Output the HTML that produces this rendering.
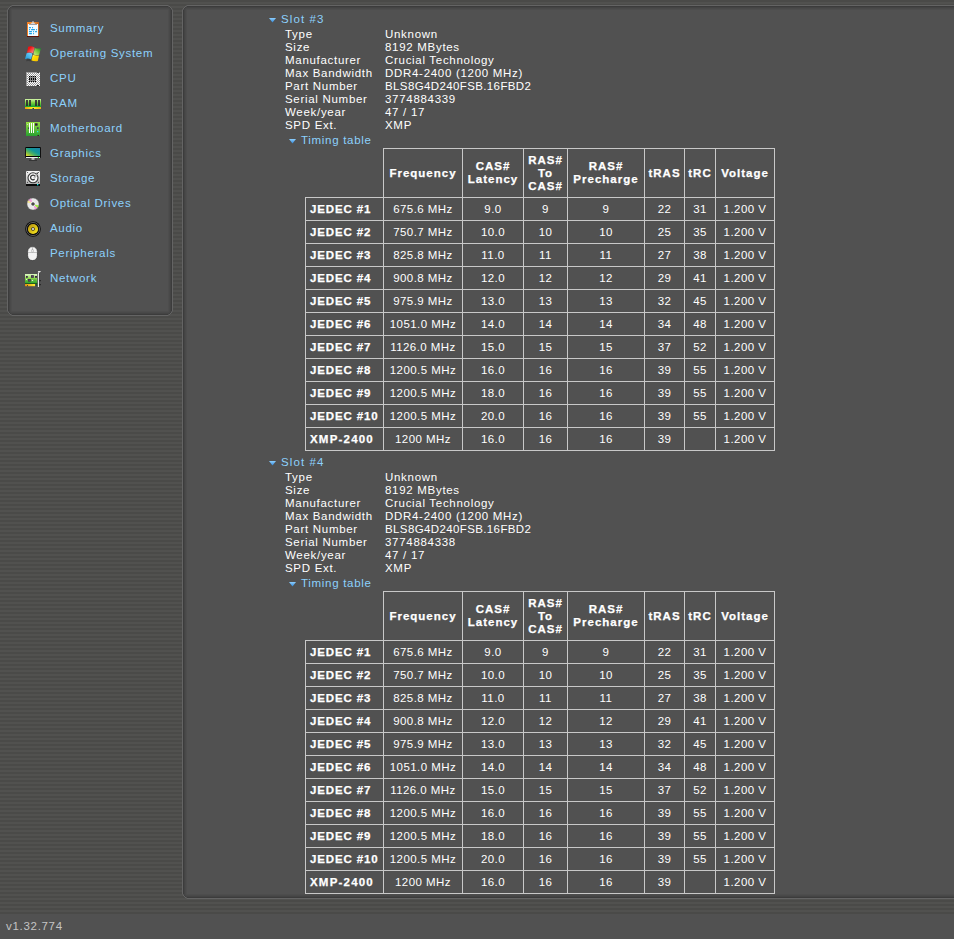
<!DOCTYPE html>
<html><head><meta charset="utf-8">
<style>
html,body{margin:0;padding:0;}
body{width:954px;height:939px;overflow:hidden;position:relative;
 background:repeating-linear-gradient(to bottom, #4a4a48 0px, #4a4a48 2px, #51514f 2px, #51514f 4px);
 font-family:"Liberation Sans", sans-serif;font-size:11.5px;letter-spacing:0.7px;color:#fff;}
.a{position:absolute;white-space:pre;line-height:13px;}
.b{font-weight:bold;font-size:11.5px;letter-spacing:1.0px;-webkit-text-stroke:0.25px #fff;}
.c{text-align:center;}
.bl{color:#8cd0fc;}
.hl{position:absolute;height:1px;background:#c8c8c8;}
.vl{position:absolute;width:1px;background:#c8c8c8;}
svg{position:absolute;overflow:visible}
</style></head><body>

<div style="position:absolute;left:0;top:914px;width:954px;height:25px;background:#515151"></div>
<div class="a" style="left:6px;top:920px;color:#c4c4c4">v1.32.774</div>
<div style="position:absolute;left:7px;top:5px;width:166px;height:311px;background:#515151;clip-path:polygon(5px 0, calc(100% - 5px) 0, 100% 5px, 100% calc(100% - 5px), calc(100% - 5px) 100%, 5px 100%, 0 calc(100% - 5px), 0 5px)"></div>
<div style="position:absolute;left:12px;top:6px;width:156px;height:1px;background:rgba(0,0,0,0.25)"></div>
<div style="position:absolute;left:12px;top:314px;width:156px;height:1px;background:rgba(0,0,0,0.25)"></div>
<div style="position:absolute;left:8px;top:10px;width:1px;height:301px;background:rgba(0,0,0,0.25)"></div>
<div style="position:absolute;left:171px;top:10px;width:1px;height:301px;background:rgba(0,0,0,0.25)"></div>
<div style="position:absolute;left:12px;top:7px;width:156px;height:1px;background:rgba(0,0,0,0.15)"></div>
<div style="position:absolute;left:12px;top:313px;width:156px;height:1px;background:rgba(0,0,0,0.15)"></div>
<div style="position:absolute;left:9px;top:10px;width:1px;height:301px;background:rgba(0,0,0,0.15)"></div>
<div style="position:absolute;left:170px;top:10px;width:1px;height:301px;background:rgba(0,0,0,0.15)"></div>
<div style="position:absolute;left:12px;top:8px;width:156px;height:1px;background:rgba(0,0,0,0.09)"></div>
<div style="position:absolute;left:12px;top:312px;width:156px;height:1px;background:rgba(0,0,0,0.09)"></div>
<div style="position:absolute;left:10px;top:10px;width:1px;height:301px;background:rgba(0,0,0,0.09)"></div>
<div style="position:absolute;left:169px;top:10px;width:1px;height:301px;background:rgba(0,0,0,0.09)"></div>
<div style="position:absolute;left:12px;top:9px;width:156px;height:1px;background:rgba(0,0,0,0.04)"></div>
<div style="position:absolute;left:12px;top:311px;width:156px;height:1px;background:rgba(0,0,0,0.04)"></div>
<div style="position:absolute;left:11px;top:10px;width:1px;height:301px;background:rgba(0,0,0,0.04)"></div>
<div style="position:absolute;left:168px;top:10px;width:1px;height:301px;background:rgba(0,0,0,0.04)"></div>
<div style="position:absolute;left:9px;top:8px;width:1px;height:1px;background:rgba(0,0,0,0.2)"></div>
<div style="position:absolute;left:10px;top:7px;width:1px;height:1px;background:rgba(0,0,0,0.2)"></div>
<div style="position:absolute;left:10px;top:8px;width:1px;height:1px;background:rgba(0,0,0,0.12)"></div>
<div style="position:absolute;left:9px;top:9px;width:1px;height:1px;background:rgba(0,0,0,0.15)"></div>
<div style="position:absolute;left:11px;top:7px;width:1px;height:1px;background:rgba(0,0,0,0.15)"></div>
<div style="position:absolute;left:11px;top:9px;width:1px;height:1px;background:rgba(0,0,0,0.06)"></div>
<div style="position:absolute;left:10px;top:9px;width:1px;height:1px;background:rgba(0,0,0,0.1)"></div>
<div style="position:absolute;left:11px;top:8px;width:1px;height:1px;background:rgba(0,0,0,0.1)"></div>
<div style="position:absolute;left:9px;top:312px;width:1px;height:1px;background:rgba(0,0,0,0.2)"></div>
<div style="position:absolute;left:10px;top:313px;width:1px;height:1px;background:rgba(0,0,0,0.2)"></div>
<div style="position:absolute;left:10px;top:312px;width:1px;height:1px;background:rgba(0,0,0,0.12)"></div>
<div style="position:absolute;left:9px;top:311px;width:1px;height:1px;background:rgba(0,0,0,0.15)"></div>
<div style="position:absolute;left:11px;top:313px;width:1px;height:1px;background:rgba(0,0,0,0.15)"></div>
<div style="position:absolute;left:11px;top:311px;width:1px;height:1px;background:rgba(0,0,0,0.06)"></div>
<div style="position:absolute;left:10px;top:311px;width:1px;height:1px;background:rgba(0,0,0,0.1)"></div>
<div style="position:absolute;left:11px;top:312px;width:1px;height:1px;background:rgba(0,0,0,0.1)"></div>
<div style="position:absolute;left:170px;top:8px;width:1px;height:1px;background:rgba(0,0,0,0.2)"></div>
<div style="position:absolute;left:169px;top:7px;width:1px;height:1px;background:rgba(0,0,0,0.2)"></div>
<div style="position:absolute;left:169px;top:8px;width:1px;height:1px;background:rgba(0,0,0,0.12)"></div>
<div style="position:absolute;left:170px;top:9px;width:1px;height:1px;background:rgba(0,0,0,0.15)"></div>
<div style="position:absolute;left:168px;top:7px;width:1px;height:1px;background:rgba(0,0,0,0.15)"></div>
<div style="position:absolute;left:168px;top:9px;width:1px;height:1px;background:rgba(0,0,0,0.06)"></div>
<div style="position:absolute;left:169px;top:9px;width:1px;height:1px;background:rgba(0,0,0,0.1)"></div>
<div style="position:absolute;left:168px;top:8px;width:1px;height:1px;background:rgba(0,0,0,0.1)"></div>
<div style="position:absolute;left:170px;top:312px;width:1px;height:1px;background:rgba(0,0,0,0.2)"></div>
<div style="position:absolute;left:169px;top:313px;width:1px;height:1px;background:rgba(0,0,0,0.2)"></div>
<div style="position:absolute;left:169px;top:312px;width:1px;height:1px;background:rgba(0,0,0,0.12)"></div>
<div style="position:absolute;left:170px;top:311px;width:1px;height:1px;background:rgba(0,0,0,0.15)"></div>
<div style="position:absolute;left:168px;top:313px;width:1px;height:1px;background:rgba(0,0,0,0.15)"></div>
<div style="position:absolute;left:168px;top:311px;width:1px;height:1px;background:rgba(0,0,0,0.06)"></div>
<div style="position:absolute;left:169px;top:311px;width:1px;height:1px;background:rgba(0,0,0,0.1)"></div>
<div style="position:absolute;left:168px;top:312px;width:1px;height:1px;background:rgba(0,0,0,0.1)"></div>
<div style="position:absolute;left:12px;top:5px;width:156px;height:1px;background:#646464"></div>
<div style="position:absolute;left:12px;top:315px;width:156px;height:1px;background:#646464"></div>
<div style="position:absolute;left:7px;top:10px;width:1px;height:301px;background:#646464"></div>
<div style="position:absolute;left:172px;top:10px;width:1px;height:301px;background:#646464"></div>
<div style="position:absolute;left:8px;top:8px;width:1px;height:1px;background:#646464"></div>
<div style="position:absolute;left:9px;top:7px;width:1px;height:1px;background:#646464"></div>
<div style="position:absolute;left:10px;top:6px;width:1px;height:1px;background:#646464"></div>
<div style="position:absolute;left:7px;top:9px;width:1px;height:1px;background:rgba(100,100,100,0.5)"></div>
<div style="position:absolute;left:11px;top:5px;width:1px;height:1px;background:rgba(100,100,100,0.5)"></div>
<div style="position:absolute;left:8px;top:312px;width:1px;height:1px;background:#646464"></div>
<div style="position:absolute;left:9px;top:313px;width:1px;height:1px;background:#646464"></div>
<div style="position:absolute;left:10px;top:314px;width:1px;height:1px;background:#646464"></div>
<div style="position:absolute;left:7px;top:311px;width:1px;height:1px;background:rgba(100,100,100,0.5)"></div>
<div style="position:absolute;left:11px;top:315px;width:1px;height:1px;background:rgba(100,100,100,0.5)"></div>
<div style="position:absolute;left:171px;top:8px;width:1px;height:1px;background:#646464"></div>
<div style="position:absolute;left:170px;top:7px;width:1px;height:1px;background:#646464"></div>
<div style="position:absolute;left:169px;top:6px;width:1px;height:1px;background:#646464"></div>
<div style="position:absolute;left:172px;top:9px;width:1px;height:1px;background:rgba(100,100,100,0.5)"></div>
<div style="position:absolute;left:168px;top:5px;width:1px;height:1px;background:rgba(100,100,100,0.5)"></div>
<div style="position:absolute;left:171px;top:312px;width:1px;height:1px;background:#646464"></div>
<div style="position:absolute;left:170px;top:313px;width:1px;height:1px;background:#646464"></div>
<div style="position:absolute;left:169px;top:314px;width:1px;height:1px;background:#646464"></div>
<div style="position:absolute;left:172px;top:311px;width:1px;height:1px;background:rgba(100,100,100,0.5)"></div>
<div style="position:absolute;left:168px;top:315px;width:1px;height:1px;background:rgba(100,100,100,0.5)"></div>
<div style="position:absolute;left:182px;top:5px;width:773px;height:894px;background:#515151;clip-path:polygon(5px 0, 100% 0, 100% 100%, 5px 100%, 0 calc(100% - 5px), 0 5px)"></div>
<div style="position:absolute;left:187px;top:6px;width:768px;height:1px;background:rgba(0,0,0,0.25)"></div>
<div style="position:absolute;left:187px;top:897px;width:768px;height:1px;background:rgba(0,0,0,0.25)"></div>
<div style="position:absolute;left:183px;top:10px;width:1px;height:884px;background:rgba(0,0,0,0.25)"></div>
<div style="position:absolute;left:187px;top:7px;width:768px;height:1px;background:rgba(0,0,0,0.15)"></div>
<div style="position:absolute;left:187px;top:896px;width:768px;height:1px;background:rgba(0,0,0,0.15)"></div>
<div style="position:absolute;left:184px;top:10px;width:1px;height:884px;background:rgba(0,0,0,0.15)"></div>
<div style="position:absolute;left:187px;top:8px;width:768px;height:1px;background:rgba(0,0,0,0.09)"></div>
<div style="position:absolute;left:187px;top:895px;width:768px;height:1px;background:rgba(0,0,0,0.09)"></div>
<div style="position:absolute;left:185px;top:10px;width:1px;height:884px;background:rgba(0,0,0,0.09)"></div>
<div style="position:absolute;left:187px;top:9px;width:768px;height:1px;background:rgba(0,0,0,0.04)"></div>
<div style="position:absolute;left:187px;top:894px;width:768px;height:1px;background:rgba(0,0,0,0.04)"></div>
<div style="position:absolute;left:186px;top:10px;width:1px;height:884px;background:rgba(0,0,0,0.04)"></div>
<div style="position:absolute;left:184px;top:8px;width:1px;height:1px;background:rgba(0,0,0,0.2)"></div>
<div style="position:absolute;left:185px;top:7px;width:1px;height:1px;background:rgba(0,0,0,0.2)"></div>
<div style="position:absolute;left:185px;top:8px;width:1px;height:1px;background:rgba(0,0,0,0.12)"></div>
<div style="position:absolute;left:184px;top:9px;width:1px;height:1px;background:rgba(0,0,0,0.15)"></div>
<div style="position:absolute;left:186px;top:7px;width:1px;height:1px;background:rgba(0,0,0,0.15)"></div>
<div style="position:absolute;left:186px;top:9px;width:1px;height:1px;background:rgba(0,0,0,0.06)"></div>
<div style="position:absolute;left:185px;top:9px;width:1px;height:1px;background:rgba(0,0,0,0.1)"></div>
<div style="position:absolute;left:186px;top:8px;width:1px;height:1px;background:rgba(0,0,0,0.1)"></div>
<div style="position:absolute;left:184px;top:895px;width:1px;height:1px;background:rgba(0,0,0,0.2)"></div>
<div style="position:absolute;left:185px;top:896px;width:1px;height:1px;background:rgba(0,0,0,0.2)"></div>
<div style="position:absolute;left:185px;top:895px;width:1px;height:1px;background:rgba(0,0,0,0.12)"></div>
<div style="position:absolute;left:184px;top:894px;width:1px;height:1px;background:rgba(0,0,0,0.15)"></div>
<div style="position:absolute;left:186px;top:896px;width:1px;height:1px;background:rgba(0,0,0,0.15)"></div>
<div style="position:absolute;left:186px;top:894px;width:1px;height:1px;background:rgba(0,0,0,0.06)"></div>
<div style="position:absolute;left:185px;top:894px;width:1px;height:1px;background:rgba(0,0,0,0.1)"></div>
<div style="position:absolute;left:186px;top:895px;width:1px;height:1px;background:rgba(0,0,0,0.1)"></div>
<div style="position:absolute;left:187px;top:5px;width:768px;height:1px;background:#646464"></div>
<div style="position:absolute;left:187px;top:898px;width:768px;height:1px;background:#646464"></div>
<div style="position:absolute;left:182px;top:10px;width:1px;height:884px;background:#646464"></div>
<div style="position:absolute;left:183px;top:8px;width:1px;height:1px;background:#646464"></div>
<div style="position:absolute;left:184px;top:7px;width:1px;height:1px;background:#646464"></div>
<div style="position:absolute;left:185px;top:6px;width:1px;height:1px;background:#646464"></div>
<div style="position:absolute;left:182px;top:9px;width:1px;height:1px;background:rgba(100,100,100,0.5)"></div>
<div style="position:absolute;left:186px;top:5px;width:1px;height:1px;background:rgba(100,100,100,0.5)"></div>
<div style="position:absolute;left:183px;top:895px;width:1px;height:1px;background:#646464"></div>
<div style="position:absolute;left:184px;top:896px;width:1px;height:1px;background:#646464"></div>
<div style="position:absolute;left:185px;top:897px;width:1px;height:1px;background:#646464"></div>
<div style="position:absolute;left:182px;top:894px;width:1px;height:1px;background:rgba(100,100,100,0.5)"></div>
<div style="position:absolute;left:186px;top:898px;width:1px;height:1px;background:rgba(100,100,100,0.5)"></div>
<svg style="left:22px;top:18px" width="22" height="22" viewBox="0 0 22 22"><defs><linearGradient id="cbo" x1="0" y1="0" x2="1" y2="0"><stop offset="0" stop-color="#f07a20"/><stop offset="0.5" stop-color="#f59a40"/><stop offset="1" stop-color="#c0601c"/></linearGradient></defs>
<rect x="5" y="4" width="12" height="15" fill="url(#cbo)"/>
<rect x="5" y="18" width="12" height="1" fill="#5a1008"/>
<rect x="6" y="6" width="10" height="12" fill="#f2fbff"/>
<path d="M8.5 6.5 L13.5 6.5 L12.5 5 L11.5 4.8 L11.5 3 L10.5 3 L10.5 4.8 L9.5 5 Z" fill="#d8d8dc"/>
<rect x="7" y="6" width="8" height="1" fill="#a0a0a4"/>
<g fill="#18a0e8">
<rect x="7" y="9" width="2" height="1.2" rx="0.5"/><rect x="10" y="9" width="1.1" height="1.2" rx="0.5"/>
<rect x="7" y="11" width="1.1" height="1.2" rx="0.5"/><rect x="9" y="11" width="4" height="1.2" rx="0.5"/><rect x="14" y="11" width="1.1" height="1.2" rx="0.5"/>
<rect x="7" y="13" width="3" height="1.2" rx="0.5"/><rect x="11" y="13" width="1.1" height="1.2" rx="0.5"/><rect x="13" y="13" width="2" height="1.2" rx="0.5"/>
<rect x="7" y="15" width="3" height="1.2" rx="0.5"/><rect x="11" y="15" width="1.1" height="1.2" rx="0.5"/>
</g></svg>
<svg style="left:22px;top:43px" width="22" height="22" viewBox="0 0 22 22"><defs>
<linearGradient id="wr" x1="0" y1="0" x2="1" y2="1"><stop offset="0.3" stop-color="#f01010"/><stop offset="1" stop-color="#f8a0a0"/></linearGradient>
<linearGradient id="wg" x1="0" y1="1" x2="1" y2="0"><stop offset="0" stop-color="#d0f080"/><stop offset="0.5" stop-color="#80c840"/><stop offset="1" stop-color="#108030"/></linearGradient>
<linearGradient id="wb" x1="0" y1="1" x2="1" y2="0"><stop offset="0" stop-color="#1898d8"/><stop offset="1" stop-color="#80d8ff"/></linearGradient>
<linearGradient id="wy" x1="0" y1="0" x2="1" y2="1"><stop offset="0" stop-color="#fff8b0"/><stop offset="0.35" stop-color="#ffe000"/><stop offset="1" stop-color="#f8b800"/></linearGradient>
</defs>
<path d="M6.5 11.2 Q9 10.6 11.8 11.8 L10.2 18.6 Q7 17.4 4 18.2 Z" fill="#202020" opacity="0.35"/>
<path d="M6.2 3.8 Q9 2.6 12.6 4.4 L11.2 10.2 Q8 8.8 5 9.8 Z" fill="url(#wr)"/>
<path d="M12.8 5 Q15.5 6 19 5 L17.2 11.8 Q14.5 12.6 11.4 11.4 Z" fill="url(#wg)"/>
<path d="M4.6 10.2 Q7.5 9.2 10.4 10.6 L9.2 16.4 Q6.2 15 3 16 Z" fill="url(#wb)"/>
<path d="M10.8 11.8 Q13.6 13 17 12.4 L15.8 18 Q12.6 18.6 9.4 17.4 Z" fill="url(#wy)"/></svg>
<svg style="left:22px;top:68px" width="22" height="22" viewBox="0 0 22 22"><rect x="4" y="4" width="14" height="14" fill="#9a9a9a"/><g fill="#ffffff"><rect x="5" y="5" width="1" height="1"/><rect x="7" y="5" width="1" height="1"/><rect x="9" y="5" width="1" height="1"/><rect x="11" y="5" width="1" height="1"/><rect x="13" y="5" width="1" height="1"/><rect x="15" y="5" width="1" height="1"/><rect x="17" y="5" width="1" height="1"/><rect x="6" y="6" width="1" height="1"/><rect x="8" y="6" width="1" height="1"/><rect x="10" y="6" width="1" height="1"/><rect x="12" y="6" width="1" height="1"/><rect x="14" y="6" width="1" height="1"/><rect x="16" y="6" width="1" height="1"/><rect x="5" y="7" width="1" height="1"/><rect x="7" y="7" width="1" height="1"/><rect x="9" y="7" width="1" height="1"/><rect x="11" y="7" width="1" height="1"/><rect x="13" y="7" width="1" height="1"/><rect x="15" y="7" width="1" height="1"/><rect x="17" y="7" width="1" height="1"/><rect x="6" y="8" width="1" height="1"/><rect x="14" y="8" width="1" height="1"/><rect x="16" y="8" width="1" height="1"/><rect x="5" y="9" width="1" height="1"/><rect x="15" y="9" width="1" height="1"/><rect x="17" y="9" width="1" height="1"/><rect x="6" y="10" width="1" height="1"/><rect x="14" y="10" width="1" height="1"/><rect x="16" y="10" width="1" height="1"/><rect x="5" y="11" width="1" height="1"/><rect x="15" y="11" width="1" height="1"/><rect x="17" y="11" width="1" height="1"/><rect x="6" y="12" width="1" height="1"/><rect x="14" y="12" width="1" height="1"/><rect x="16" y="12" width="1" height="1"/><rect x="5" y="13" width="1" height="1"/><rect x="15" y="13" width="1" height="1"/><rect x="17" y="13" width="1" height="1"/><rect x="6" y="14" width="1" height="1"/><rect x="8" y="14" width="1" height="1"/><rect x="10" y="14" width="1" height="1"/><rect x="12" y="14" width="1" height="1"/><rect x="14" y="14" width="1" height="1"/><rect x="16" y="14" width="1" height="1"/><rect x="5" y="15" width="1" height="1"/><rect x="7" y="15" width="1" height="1"/><rect x="9" y="15" width="1" height="1"/><rect x="11" y="15" width="1" height="1"/><rect x="13" y="15" width="1" height="1"/><rect x="15" y="15" width="1" height="1"/><rect x="17" y="15" width="1" height="1"/><rect x="6" y="16" width="1" height="1"/><rect x="8" y="16" width="1" height="1"/><rect x="10" y="16" width="1" height="1"/><rect x="12" y="16" width="1" height="1"/><rect x="14" y="16" width="1" height="1"/><rect x="16" y="16" width="1" height="1"/><rect x="5" y="17" width="1" height="1"/><rect x="7" y="17" width="1" height="1"/><rect x="9" y="17" width="1" height="1"/><rect x="11" y="17" width="1" height="1"/><rect x="13" y="17" width="1" height="1"/><rect x="15" y="17" width="1" height="1"/><rect x="17" y="17" width="1" height="1"/></g><rect x="7" y="8" width="7" height="6" fill="#8a8a8a"/><g fill="#000"><rect x="7" y="8" width="1" height="1"/><rect x="7" y="10" width="1" height="2"/><rect x="7" y="13" width="1" height="1"/><rect x="9" y="8" width="1" height="1"/><rect x="9" y="10" width="1" height="2"/><rect x="9" y="13" width="1" height="1"/><rect x="11" y="8" width="1" height="1"/><rect x="11" y="10" width="1" height="2"/><rect x="11" y="13" width="1" height="1"/><rect x="13" y="8" width="1" height="1"/><rect x="13" y="10" width="1" height="2"/><rect x="13" y="13" width="1" height="1"/></g><rect x="15" y="4" width="2" height="1" fill="#444"/><rect x="15" y="17" width="2" height="1" fill="#222"/></svg>
<svg style="left:22px;top:93px" width="22" height="22" viewBox="0 0 22 22"><defs><linearGradient id="rmg" x1="0" y1="0" x2="0" y2="1"><stop offset="0" stop-color="#d0f4a8"/><stop offset="0.45" stop-color="#80d040"/><stop offset="1" stop-color="#10a030"/></linearGradient>
<linearGradient id="rmy" x1="0" y1="0" x2="1" y2="0"><stop offset="0" stop-color="#e8a010"/><stop offset="0.5" stop-color="#fff020"/><stop offset="1" stop-color="#f0b010"/></linearGradient></defs>
<rect x="3" y="6" width="16" height="8" fill="url(#rmg)"/>
<rect x="3" y="14" width="16" height="2" fill="url(#rmy)"/>
<rect x="10.5" y="15" width="1.5" height="1" fill="#203060"/>
<g fill="#2a1a30"><rect x="4.2" y="7" width="1.6" height="6"/><rect x="7.2" y="7" width="1.6" height="6"/><rect x="13.2" y="7" width="1.6" height="6"/><rect x="16.2" y="7" width="1.6" height="6"/></g></svg>
<svg style="left:22px;top:118px" width="22" height="22" viewBox="0 0 22 22"><defs><linearGradient id="mbg" x1="0" y1="0" x2="0" y2="1"><stop offset="0" stop-color="#98e040"/><stop offset="1" stop-color="#28a030"/></linearGradient></defs>
<rect x="4" y="4" width="14" height="14" fill="url(#mbg)"/>
<g fill="#ffffff"><rect x="7" y="5" width="1" height="10"/><rect x="9" y="5" width="1" height="10"/><rect x="11" y="5" width="1" height="10"/></g>
<rect x="13" y="5.3" width="2.6" height="2.4" fill="#30203a"/>
<rect x="15" y="9.3" width="1.6" height="1.6" fill="#403050"/>
<rect x="6" y="9.5" width="1" height="1.3" fill="#403050"/>
<circle cx="5.5" cy="6.5" r="0.6" fill="#d8d0e0"/>
<rect x="15" y="13" width="1.2" height="1.2" fill="#20f0f0"/>
<rect x="15.5" y="17" width="1.5" height="1" fill="#301828"/></svg>
<svg style="left:22px;top:143px" width="22" height="22" viewBox="0 0 22 22"><defs><linearGradient id="mng" x1="0" y1="1" x2="1" y2="0"><stop offset="0" stop-color="#f0e020"/><stop offset="0.35" stop-color="#50b060"/><stop offset="0.6" stop-color="#109898"/><stop offset="1" stop-color="#2080a8"/></linearGradient></defs>
<rect x="3.3" y="4" width="15.5" height="11" rx="0.8" fill="#000"/>
<rect x="4" y="5" width="14" height="8" fill="url(#mng)"/>
<rect x="4" y="14" width="14" height="1" fill="#f0f0f0"/>
<rect x="15.8" y="14" width="1.2" height="1" fill="#10e010"/>
<rect x="9.5" y="15.3" width="3" height="1.5" fill="#e8e8e8"/>
<rect x="7" y="16.8" width="8" height="0.9" fill="#202020" opacity="0.8"/></svg>
<svg style="left:22px;top:168px" width="22" height="22" viewBox="0 0 22 22"><defs><linearGradient id="hdg" x1="0" y1="0" x2="0" y2="1"><stop offset="0" stop-color="#f8f8f8"/><stop offset="1" stop-color="#b0b0b0"/></linearGradient></defs>
<rect x="4" y="3" width="14" height="13.5" rx="1.2" fill="url(#hdg)"/>
<rect x="4" y="16" width="14" height="2" fill="#080808"/>
<circle cx="11" cy="9.8" r="5" fill="#f6f6f6" stroke="#383838" stroke-width="1.1"/>
<path d="M13.2 8.6 A2.4 2.4 0 1 0 12.6 11.3" fill="none" stroke="#303030" stroke-width="1.2"/>
<path d="M11.8 9.6 L15.2 5.6 L16 6.3 L12.6 10.4 Z" fill="#d0d0d0" stroke="#606060" stroke-width="0.3"/>
<circle cx="15.2" cy="5.2" r="0.7" fill="#101010"/>
<circle cx="5.6" cy="4.6" r="0.5" fill="#303030"/><circle cx="16.4" cy="4.6" r="0.5" fill="#303030"/>
<circle cx="5.5" cy="14.3" r="0.55" fill="#303030"/><circle cx="16.5" cy="14.3" r="0.55" fill="#303030"/>
<rect x="15" y="16" width="1.3" height="1.3" fill="#10f0f0"/></svg>
<svg style="left:22px;top:193px" width="22" height="22" viewBox="0 0 22 22"><circle cx="11" cy="11" r="6" fill="#e8e8e8"/>
<path d="M11 11 L6 7.2 A6 6 0 0 1 9 5.3 Z" fill="#f0a0d8"/>
<path d="M11 11 L5.2 9.5 A6 6 0 0 1 6 7.2 Z" fill="#f8e890"/>
<path d="M11 11 L16.9 12.5 A6 6 0 0 1 15.5 15 Z" fill="#a0f040"/>
<path d="M11 11 L15.5 15 A6 6 0 0 1 13 16.6 Z" fill="#f0a0d8"/>
<circle cx="11" cy="11" r="2.4" fill="#ffffff"/>
<circle cx="11" cy="11" r="1.8" fill="#484848"/>
<circle cx="11" cy="11" r="6" fill="none" stroke="#606060" stroke-width="0.4"/></svg>
<svg style="left:22px;top:218px" width="22" height="22" viewBox="0 0 22 22"><defs><linearGradient id="spg" x1="0" y1="0" x2="1" y2="1"><stop offset="0" stop-color="#b08a10"/><stop offset="1" stop-color="#fff020"/></linearGradient></defs>
<circle cx="11" cy="11" r="7.8" fill="#0a0a0a"/>
<circle cx="11" cy="11" r="6.6" fill="none" stroke="#6a6a6a" stroke-width="0.8"/>
<circle cx="11" cy="11" r="5.1" fill="url(#spg)"/>
<circle cx="11" cy="11" r="1.8" fill="#202030"/>
<circle cx="11" cy="11" r="1" fill="#f8f8f8"/></svg>
<svg style="left:22px;top:243px" width="22" height="22" viewBox="0 0 22 22"><rect x="5.6" y="3.6" width="9.8" height="14" rx="4.9" ry="5" fill="#f4f4f4" stroke="#2a2a2a" stroke-width="0.7"/>
<rect x="5.8" y="9.1" width="9.4" height="0.6" fill="#a0a0a0"/>
<rect x="10.2" y="4" width="0.6" height="3" fill="#a0a0a0"/>
<rect x="9.6" y="6.5" width="1.8" height="2.6" rx="0.6" fill="none" stroke="#a0a0a0" stroke-width="0.5"/></svg>
<svg style="left:22px;top:268px" width="22" height="22" viewBox="0 0 22 22"><defs><linearGradient id="ncg" x1="0" y1="0" x2="0" y2="1"><stop offset="0" stop-color="#e0f8c8"/><stop offset="0.45" stop-color="#90d850"/><stop offset="1" stop-color="#28a028"/></linearGradient>
<linearGradient id="ncy" x1="0" y1="0" x2="1" y2="0"><stop offset="0" stop-color="#e09010"/><stop offset="1" stop-color="#fff030"/></linearGradient></defs>
<rect x="3" y="6" width="12.2" height="9.3" fill="url(#ncg)"/>
<rect x="3" y="15" width="12.2" height="0.7" fill="#105a10"/>
<rect x="14.4" y="15" width="0.8" height="3" fill="#106010"/>
<rect x="3" y="16" width="10" height="2.2" fill="url(#ncy)"/>
<rect x="5" y="17" width="0.8" height="1.2" fill="#303030"/>
<g fill="#3a2a44"><rect x="4" y="8" width="1.8" height="1.8"/><rect x="9" y="7.2" width="2.8" height="2.6"/><rect x="13" y="8" width="2" height="1.8"/><rect x="6" y="11" width="2.8" height="2.6"/></g>
<g fill="#5a4a64"><rect x="9.6" y="7.8" width="1.6" height="1.4"/><rect x="6.6" y="11.6" width="1.6" height="1.4"/></g>
<circle cx="4.5" cy="11.5" r="0.6" fill="#f0f0f0"/><circle cx="10.5" cy="12.5" r="0.6" fill="#f0f0f0"/>
<rect x="12.2" y="11.5" width="1.6" height="1.6" fill="#50a040" opacity="0.7"/>
<rect x="15.9" y="4.6" width="1.2" height="14.4" fill="#ececec"/>
<path d="M15.8 3 L19 3 L17.6 4.8 L16.4 4.8 Z" fill="#e8e8e8"/>
<rect x="17.2" y="4.6" width="0.6" height="14" fill="#101010" opacity="0.6"/>
<rect x="17.6" y="12" width="1" height="1.2" fill="#101010"/><rect x="17.6" y="16" width="1" height="1.2" fill="#101010"/></svg>
<div class="a bl" style="left:50px;top:22px">Summary</div>
<div class="a bl" style="left:50px;top:47px">Operating System</div>
<div class="a bl" style="left:50px;top:72px">CPU</div>
<div class="a bl" style="left:50px;top:97px">RAM</div>
<div class="a bl" style="left:50px;top:122px">Motherboard</div>
<div class="a bl" style="left:50px;top:147px">Graphics</div>
<div class="a bl" style="left:50px;top:172px">Storage</div>
<div class="a bl" style="left:50px;top:197px">Optical Drives</div>
<div class="a bl" style="left:50px;top:222px">Audio</div>
<div class="a bl" style="left:50px;top:247px">Peripherals</div>
<div class="a bl" style="left:50px;top:272px">Network</div>
<svg style="left:269px;top:18px" width="8" height="5"><defs><linearGradient id="ag" x1="0" y1="0" x2="0" y2="1"><stop offset="0" stop-color="#8fd0ff"/><stop offset="1" stop-color="#2f86d8"/></linearGradient></defs><polygon points="0,0 7,0 3.5,4.5" fill="url(#ag)"/></svg>
<div class="a bl" style="left:281px;top:13px;letter-spacing:1.1px">Slot #3</div>
<div class="a" style="left:285px;top:28px">Type</div>
<div class="a" style="left:385px;top:28px">Unknown</div>
<div class="a" style="left:285px;top:41px">Size</div>
<div class="a" style="left:385px;top:41px">8192 MBytes</div>
<div class="a" style="left:285px;top:54px">Manufacturer</div>
<div class="a" style="left:385px;top:54px">Crucial Technology</div>
<div class="a" style="left:285px;top:67px">Max Bandwidth</div>
<div class="a" style="left:385px;top:67px">DDR4-2400 (1200 MHz)</div>
<div class="a" style="left:285px;top:80px">Part Number</div>
<div class="a" style="left:385px;top:80px;letter-spacing:0.38px">BLS8G4D240FSB.16FBD2</div>
<div class="a" style="left:285px;top:93px">Serial Number</div>
<div class="a" style="left:385px;top:93px">3774884339</div>
<div class="a" style="left:285px;top:106px">Week/year</div>
<div class="a" style="left:385px;top:106px">47 / 17</div>
<div class="a" style="left:285px;top:119px">SPD Ext.</div>
<div class="a" style="left:385px;top:119px">XMP</div>
<svg style="left:289px;top:139px" width="8" height="5"><defs><linearGradient id="ag" x1="0" y1="0" x2="0" y2="1"><stop offset="0" stop-color="#8fd0ff"/><stop offset="1" stop-color="#2f86d8"/></linearGradient></defs><polygon points="0,0 7,0 3.5,4.5" fill="url(#ag)"/></svg>
<div class="a bl" style="left:301px;top:134px">Timing table</div>
<div class="hl" style="left:383px;top:148px;width:392px"></div>
<div class="hl" style="left:305px;top:197px;width:470px"></div>
<div class="hl" style="left:305px;top:220px;width:470px"></div>
<div class="hl" style="left:305px;top:243px;width:470px"></div>
<div class="hl" style="left:305px;top:266px;width:470px"></div>
<div class="hl" style="left:305px;top:289px;width:470px"></div>
<div class="hl" style="left:305px;top:312px;width:470px"></div>
<div class="hl" style="left:305px;top:335px;width:470px"></div>
<div class="hl" style="left:305px;top:358px;width:470px"></div>
<div class="hl" style="left:305px;top:381px;width:470px"></div>
<div class="hl" style="left:305px;top:404px;width:470px"></div>
<div class="hl" style="left:305px;top:427px;width:470px"></div>
<div class="hl" style="left:305px;top:450px;width:470px"></div>
<div class="vl" style="left:305px;top:197px;height:254px"></div>
<div class="vl" style="left:383px;top:148px;height:303px"></div>
<div class="vl" style="left:462px;top:148px;height:303px"></div>
<div class="vl" style="left:523px;top:148px;height:303px"></div>
<div class="vl" style="left:567px;top:148px;height:303px"></div>
<div class="vl" style="left:644px;top:148px;height:303px"></div>
<div class="vl" style="left:684px;top:148px;height:303px"></div>
<div class="vl" style="left:715px;top:148px;height:303px"></div>
<div class="vl" style="left:774px;top:148px;height:303px"></div>
<div class="a b c" style="left:384px;width:78px;top:167px">Frequency</div>
<div class="a b c" style="left:463px;width:60px;top:160px">CAS#</div>
<div class="a b c" style="left:463px;width:60px;top:173px">Latency</div>
<div class="a b c" style="left:524px;width:43px;top:154px">RAS#</div>
<div class="a b c" style="left:524px;width:43px;top:167px">To</div>
<div class="a b c" style="left:524px;width:43px;top:180px">CAS#</div>
<div class="a b c" style="left:568px;width:76px;top:160px">RAS#</div>
<div class="a b c" style="left:568px;width:76px;top:173px">Precharge</div>
<div class="a b c" style="left:645px;width:39px;top:167px">tRAS</div>
<div class="a b c" style="left:685px;width:30px;top:167px">tRC</div>
<div class="a b c" style="left:716px;width:58px;top:167px">Voltage</div>
<div class="a b" style="left:310px;top:203px;letter-spacing:0.85px">JEDEC #1</div>
<div class="a c" style="left:384px;width:78px;top:203px;letter-spacing:0.45px">675.6 MHz</div>
<div class="a c" style="left:463px;width:60px;top:203px;letter-spacing:0.45px">9.0</div>
<div class="a c" style="left:524px;width:43px;top:203px;letter-spacing:0.45px">9</div>
<div class="a c" style="left:568px;width:76px;top:203px;letter-spacing:0.45px">9</div>
<div class="a c" style="left:645px;width:39px;top:203px;letter-spacing:0.45px">22</div>
<div class="a c" style="left:685px;width:30px;top:203px;letter-spacing:0.45px">31</div>
<div class="a c" style="left:716px;width:58px;top:203px;letter-spacing:0.45px">1.200 V</div>
<div class="a b" style="left:310px;top:226px;letter-spacing:0.85px">JEDEC #2</div>
<div class="a c" style="left:384px;width:78px;top:226px;letter-spacing:0.45px">750.7 MHz</div>
<div class="a c" style="left:463px;width:60px;top:226px;letter-spacing:0.45px">10.0</div>
<div class="a c" style="left:524px;width:43px;top:226px;letter-spacing:0.45px">10</div>
<div class="a c" style="left:568px;width:76px;top:226px;letter-spacing:0.45px">10</div>
<div class="a c" style="left:645px;width:39px;top:226px;letter-spacing:0.45px">25</div>
<div class="a c" style="left:685px;width:30px;top:226px;letter-spacing:0.45px">35</div>
<div class="a c" style="left:716px;width:58px;top:226px;letter-spacing:0.45px">1.200 V</div>
<div class="a b" style="left:310px;top:249px;letter-spacing:0.85px">JEDEC #3</div>
<div class="a c" style="left:384px;width:78px;top:249px;letter-spacing:0.45px">825.8 MHz</div>
<div class="a c" style="left:463px;width:60px;top:249px;letter-spacing:0.45px">11.0</div>
<div class="a c" style="left:524px;width:43px;top:249px;letter-spacing:0.45px">11</div>
<div class="a c" style="left:568px;width:76px;top:249px;letter-spacing:0.45px">11</div>
<div class="a c" style="left:645px;width:39px;top:249px;letter-spacing:0.45px">27</div>
<div class="a c" style="left:685px;width:30px;top:249px;letter-spacing:0.45px">38</div>
<div class="a c" style="left:716px;width:58px;top:249px;letter-spacing:0.45px">1.200 V</div>
<div class="a b" style="left:310px;top:272px;letter-spacing:0.85px">JEDEC #4</div>
<div class="a c" style="left:384px;width:78px;top:272px;letter-spacing:0.45px">900.8 MHz</div>
<div class="a c" style="left:463px;width:60px;top:272px;letter-spacing:0.45px">12.0</div>
<div class="a c" style="left:524px;width:43px;top:272px;letter-spacing:0.45px">12</div>
<div class="a c" style="left:568px;width:76px;top:272px;letter-spacing:0.45px">12</div>
<div class="a c" style="left:645px;width:39px;top:272px;letter-spacing:0.45px">29</div>
<div class="a c" style="left:685px;width:30px;top:272px;letter-spacing:0.45px">41</div>
<div class="a c" style="left:716px;width:58px;top:272px;letter-spacing:0.45px">1.200 V</div>
<div class="a b" style="left:310px;top:295px;letter-spacing:0.85px">JEDEC #5</div>
<div class="a c" style="left:384px;width:78px;top:295px;letter-spacing:0.45px">975.9 MHz</div>
<div class="a c" style="left:463px;width:60px;top:295px;letter-spacing:0.45px">13.0</div>
<div class="a c" style="left:524px;width:43px;top:295px;letter-spacing:0.45px">13</div>
<div class="a c" style="left:568px;width:76px;top:295px;letter-spacing:0.45px">13</div>
<div class="a c" style="left:645px;width:39px;top:295px;letter-spacing:0.45px">32</div>
<div class="a c" style="left:685px;width:30px;top:295px;letter-spacing:0.45px">45</div>
<div class="a c" style="left:716px;width:58px;top:295px;letter-spacing:0.45px">1.200 V</div>
<div class="a b" style="left:310px;top:318px;letter-spacing:0.85px">JEDEC #6</div>
<div class="a c" style="left:384px;width:78px;top:318px;letter-spacing:0.45px">1051.0 MHz</div>
<div class="a c" style="left:463px;width:60px;top:318px;letter-spacing:0.45px">14.0</div>
<div class="a c" style="left:524px;width:43px;top:318px;letter-spacing:0.45px">14</div>
<div class="a c" style="left:568px;width:76px;top:318px;letter-spacing:0.45px">14</div>
<div class="a c" style="left:645px;width:39px;top:318px;letter-spacing:0.45px">34</div>
<div class="a c" style="left:685px;width:30px;top:318px;letter-spacing:0.45px">48</div>
<div class="a c" style="left:716px;width:58px;top:318px;letter-spacing:0.45px">1.200 V</div>
<div class="a b" style="left:310px;top:341px;letter-spacing:0.85px">JEDEC #7</div>
<div class="a c" style="left:384px;width:78px;top:341px;letter-spacing:0.45px">1126.0 MHz</div>
<div class="a c" style="left:463px;width:60px;top:341px;letter-spacing:0.45px">15.0</div>
<div class="a c" style="left:524px;width:43px;top:341px;letter-spacing:0.45px">15</div>
<div class="a c" style="left:568px;width:76px;top:341px;letter-spacing:0.45px">15</div>
<div class="a c" style="left:645px;width:39px;top:341px;letter-spacing:0.45px">37</div>
<div class="a c" style="left:685px;width:30px;top:341px;letter-spacing:0.45px">52</div>
<div class="a c" style="left:716px;width:58px;top:341px;letter-spacing:0.45px">1.200 V</div>
<div class="a b" style="left:310px;top:364px;letter-spacing:0.85px">JEDEC #8</div>
<div class="a c" style="left:384px;width:78px;top:364px;letter-spacing:0.45px">1200.5 MHz</div>
<div class="a c" style="left:463px;width:60px;top:364px;letter-spacing:0.45px">16.0</div>
<div class="a c" style="left:524px;width:43px;top:364px;letter-spacing:0.45px">16</div>
<div class="a c" style="left:568px;width:76px;top:364px;letter-spacing:0.45px">16</div>
<div class="a c" style="left:645px;width:39px;top:364px;letter-spacing:0.45px">39</div>
<div class="a c" style="left:685px;width:30px;top:364px;letter-spacing:0.45px">55</div>
<div class="a c" style="left:716px;width:58px;top:364px;letter-spacing:0.45px">1.200 V</div>
<div class="a b" style="left:310px;top:387px;letter-spacing:0.85px">JEDEC #9</div>
<div class="a c" style="left:384px;width:78px;top:387px;letter-spacing:0.45px">1200.5 MHz</div>
<div class="a c" style="left:463px;width:60px;top:387px;letter-spacing:0.45px">18.0</div>
<div class="a c" style="left:524px;width:43px;top:387px;letter-spacing:0.45px">16</div>
<div class="a c" style="left:568px;width:76px;top:387px;letter-spacing:0.45px">16</div>
<div class="a c" style="left:645px;width:39px;top:387px;letter-spacing:0.45px">39</div>
<div class="a c" style="left:685px;width:30px;top:387px;letter-spacing:0.45px">55</div>
<div class="a c" style="left:716px;width:58px;top:387px;letter-spacing:0.45px">1.200 V</div>
<div class="a b" style="left:310px;top:410px;letter-spacing:0.85px">JEDEC #10</div>
<div class="a c" style="left:384px;width:78px;top:410px;letter-spacing:0.45px">1200.5 MHz</div>
<div class="a c" style="left:463px;width:60px;top:410px;letter-spacing:0.45px">20.0</div>
<div class="a c" style="left:524px;width:43px;top:410px;letter-spacing:0.45px">16</div>
<div class="a c" style="left:568px;width:76px;top:410px;letter-spacing:0.45px">16</div>
<div class="a c" style="left:645px;width:39px;top:410px;letter-spacing:0.45px">39</div>
<div class="a c" style="left:685px;width:30px;top:410px;letter-spacing:0.45px">55</div>
<div class="a c" style="left:716px;width:58px;top:410px;letter-spacing:0.45px">1.200 V</div>
<div class="a b" style="left:310px;top:433px;letter-spacing:1.2px">XMP-2400</div>
<div class="a c" style="left:384px;width:78px;top:433px;letter-spacing:0.45px">1200 MHz</div>
<div class="a c" style="left:463px;width:60px;top:433px;letter-spacing:0.45px">16.0</div>
<div class="a c" style="left:524px;width:43px;top:433px;letter-spacing:0.45px">16</div>
<div class="a c" style="left:568px;width:76px;top:433px;letter-spacing:0.45px">16</div>
<div class="a c" style="left:645px;width:39px;top:433px;letter-spacing:0.45px">39</div>
<div class="a c" style="left:685px;width:30px;top:433px;letter-spacing:0.45px"></div>
<div class="a c" style="left:716px;width:58px;top:433px;letter-spacing:0.45px">1.200 V</div>
<svg style="left:269px;top:461px" width="8" height="5"><defs><linearGradient id="ag" x1="0" y1="0" x2="0" y2="1"><stop offset="0" stop-color="#8fd0ff"/><stop offset="1" stop-color="#2f86d8"/></linearGradient></defs><polygon points="0,0 7,0 3.5,4.5" fill="url(#ag)"/></svg>
<div class="a bl" style="left:281px;top:456px;letter-spacing:1.1px">Slot #4</div>
<div class="a" style="left:285px;top:471px">Type</div>
<div class="a" style="left:385px;top:471px">Unknown</div>
<div class="a" style="left:285px;top:484px">Size</div>
<div class="a" style="left:385px;top:484px">8192 MBytes</div>
<div class="a" style="left:285px;top:497px">Manufacturer</div>
<div class="a" style="left:385px;top:497px">Crucial Technology</div>
<div class="a" style="left:285px;top:510px">Max Bandwidth</div>
<div class="a" style="left:385px;top:510px">DDR4-2400 (1200 MHz)</div>
<div class="a" style="left:285px;top:523px">Part Number</div>
<div class="a" style="left:385px;top:523px;letter-spacing:0.38px">BLS8G4D240FSB.16FBD2</div>
<div class="a" style="left:285px;top:536px">Serial Number</div>
<div class="a" style="left:385px;top:536px">3774884338</div>
<div class="a" style="left:285px;top:549px">Week/year</div>
<div class="a" style="left:385px;top:549px">47 / 17</div>
<div class="a" style="left:285px;top:562px">SPD Ext.</div>
<div class="a" style="left:385px;top:562px">XMP</div>
<svg style="left:289px;top:582px" width="8" height="5"><defs><linearGradient id="ag" x1="0" y1="0" x2="0" y2="1"><stop offset="0" stop-color="#8fd0ff"/><stop offset="1" stop-color="#2f86d8"/></linearGradient></defs><polygon points="0,0 7,0 3.5,4.5" fill="url(#ag)"/></svg>
<div class="a bl" style="left:301px;top:577px">Timing table</div>
<div class="hl" style="left:383px;top:591px;width:392px"></div>
<div class="hl" style="left:305px;top:640px;width:470px"></div>
<div class="hl" style="left:305px;top:663px;width:470px"></div>
<div class="hl" style="left:305px;top:686px;width:470px"></div>
<div class="hl" style="left:305px;top:709px;width:470px"></div>
<div class="hl" style="left:305px;top:732px;width:470px"></div>
<div class="hl" style="left:305px;top:755px;width:470px"></div>
<div class="hl" style="left:305px;top:778px;width:470px"></div>
<div class="hl" style="left:305px;top:801px;width:470px"></div>
<div class="hl" style="left:305px;top:824px;width:470px"></div>
<div class="hl" style="left:305px;top:847px;width:470px"></div>
<div class="hl" style="left:305px;top:870px;width:470px"></div>
<div class="hl" style="left:305px;top:893px;width:470px"></div>
<div class="vl" style="left:305px;top:640px;height:254px"></div>
<div class="vl" style="left:383px;top:591px;height:303px"></div>
<div class="vl" style="left:462px;top:591px;height:303px"></div>
<div class="vl" style="left:523px;top:591px;height:303px"></div>
<div class="vl" style="left:567px;top:591px;height:303px"></div>
<div class="vl" style="left:644px;top:591px;height:303px"></div>
<div class="vl" style="left:684px;top:591px;height:303px"></div>
<div class="vl" style="left:715px;top:591px;height:303px"></div>
<div class="vl" style="left:774px;top:591px;height:303px"></div>
<div class="a b c" style="left:384px;width:78px;top:610px">Frequency</div>
<div class="a b c" style="left:463px;width:60px;top:603px">CAS#</div>
<div class="a b c" style="left:463px;width:60px;top:616px">Latency</div>
<div class="a b c" style="left:524px;width:43px;top:597px">RAS#</div>
<div class="a b c" style="left:524px;width:43px;top:610px">To</div>
<div class="a b c" style="left:524px;width:43px;top:623px">CAS#</div>
<div class="a b c" style="left:568px;width:76px;top:603px">RAS#</div>
<div class="a b c" style="left:568px;width:76px;top:616px">Precharge</div>
<div class="a b c" style="left:645px;width:39px;top:610px">tRAS</div>
<div class="a b c" style="left:685px;width:30px;top:610px">tRC</div>
<div class="a b c" style="left:716px;width:58px;top:610px">Voltage</div>
<div class="a b" style="left:310px;top:646px;letter-spacing:0.85px">JEDEC #1</div>
<div class="a c" style="left:384px;width:78px;top:646px;letter-spacing:0.45px">675.6 MHz</div>
<div class="a c" style="left:463px;width:60px;top:646px;letter-spacing:0.45px">9.0</div>
<div class="a c" style="left:524px;width:43px;top:646px;letter-spacing:0.45px">9</div>
<div class="a c" style="left:568px;width:76px;top:646px;letter-spacing:0.45px">9</div>
<div class="a c" style="left:645px;width:39px;top:646px;letter-spacing:0.45px">22</div>
<div class="a c" style="left:685px;width:30px;top:646px;letter-spacing:0.45px">31</div>
<div class="a c" style="left:716px;width:58px;top:646px;letter-spacing:0.45px">1.200 V</div>
<div class="a b" style="left:310px;top:669px;letter-spacing:0.85px">JEDEC #2</div>
<div class="a c" style="left:384px;width:78px;top:669px;letter-spacing:0.45px">750.7 MHz</div>
<div class="a c" style="left:463px;width:60px;top:669px;letter-spacing:0.45px">10.0</div>
<div class="a c" style="left:524px;width:43px;top:669px;letter-spacing:0.45px">10</div>
<div class="a c" style="left:568px;width:76px;top:669px;letter-spacing:0.45px">10</div>
<div class="a c" style="left:645px;width:39px;top:669px;letter-spacing:0.45px">25</div>
<div class="a c" style="left:685px;width:30px;top:669px;letter-spacing:0.45px">35</div>
<div class="a c" style="left:716px;width:58px;top:669px;letter-spacing:0.45px">1.200 V</div>
<div class="a b" style="left:310px;top:692px;letter-spacing:0.85px">JEDEC #3</div>
<div class="a c" style="left:384px;width:78px;top:692px;letter-spacing:0.45px">825.8 MHz</div>
<div class="a c" style="left:463px;width:60px;top:692px;letter-spacing:0.45px">11.0</div>
<div class="a c" style="left:524px;width:43px;top:692px;letter-spacing:0.45px">11</div>
<div class="a c" style="left:568px;width:76px;top:692px;letter-spacing:0.45px">11</div>
<div class="a c" style="left:645px;width:39px;top:692px;letter-spacing:0.45px">27</div>
<div class="a c" style="left:685px;width:30px;top:692px;letter-spacing:0.45px">38</div>
<div class="a c" style="left:716px;width:58px;top:692px;letter-spacing:0.45px">1.200 V</div>
<div class="a b" style="left:310px;top:715px;letter-spacing:0.85px">JEDEC #4</div>
<div class="a c" style="left:384px;width:78px;top:715px;letter-spacing:0.45px">900.8 MHz</div>
<div class="a c" style="left:463px;width:60px;top:715px;letter-spacing:0.45px">12.0</div>
<div class="a c" style="left:524px;width:43px;top:715px;letter-spacing:0.45px">12</div>
<div class="a c" style="left:568px;width:76px;top:715px;letter-spacing:0.45px">12</div>
<div class="a c" style="left:645px;width:39px;top:715px;letter-spacing:0.45px">29</div>
<div class="a c" style="left:685px;width:30px;top:715px;letter-spacing:0.45px">41</div>
<div class="a c" style="left:716px;width:58px;top:715px;letter-spacing:0.45px">1.200 V</div>
<div class="a b" style="left:310px;top:738px;letter-spacing:0.85px">JEDEC #5</div>
<div class="a c" style="left:384px;width:78px;top:738px;letter-spacing:0.45px">975.9 MHz</div>
<div class="a c" style="left:463px;width:60px;top:738px;letter-spacing:0.45px">13.0</div>
<div class="a c" style="left:524px;width:43px;top:738px;letter-spacing:0.45px">13</div>
<div class="a c" style="left:568px;width:76px;top:738px;letter-spacing:0.45px">13</div>
<div class="a c" style="left:645px;width:39px;top:738px;letter-spacing:0.45px">32</div>
<div class="a c" style="left:685px;width:30px;top:738px;letter-spacing:0.45px">45</div>
<div class="a c" style="left:716px;width:58px;top:738px;letter-spacing:0.45px">1.200 V</div>
<div class="a b" style="left:310px;top:761px;letter-spacing:0.85px">JEDEC #6</div>
<div class="a c" style="left:384px;width:78px;top:761px;letter-spacing:0.45px">1051.0 MHz</div>
<div class="a c" style="left:463px;width:60px;top:761px;letter-spacing:0.45px">14.0</div>
<div class="a c" style="left:524px;width:43px;top:761px;letter-spacing:0.45px">14</div>
<div class="a c" style="left:568px;width:76px;top:761px;letter-spacing:0.45px">14</div>
<div class="a c" style="left:645px;width:39px;top:761px;letter-spacing:0.45px">34</div>
<div class="a c" style="left:685px;width:30px;top:761px;letter-spacing:0.45px">48</div>
<div class="a c" style="left:716px;width:58px;top:761px;letter-spacing:0.45px">1.200 V</div>
<div class="a b" style="left:310px;top:784px;letter-spacing:0.85px">JEDEC #7</div>
<div class="a c" style="left:384px;width:78px;top:784px;letter-spacing:0.45px">1126.0 MHz</div>
<div class="a c" style="left:463px;width:60px;top:784px;letter-spacing:0.45px">15.0</div>
<div class="a c" style="left:524px;width:43px;top:784px;letter-spacing:0.45px">15</div>
<div class="a c" style="left:568px;width:76px;top:784px;letter-spacing:0.45px">15</div>
<div class="a c" style="left:645px;width:39px;top:784px;letter-spacing:0.45px">37</div>
<div class="a c" style="left:685px;width:30px;top:784px;letter-spacing:0.45px">52</div>
<div class="a c" style="left:716px;width:58px;top:784px;letter-spacing:0.45px">1.200 V</div>
<div class="a b" style="left:310px;top:807px;letter-spacing:0.85px">JEDEC #8</div>
<div class="a c" style="left:384px;width:78px;top:807px;letter-spacing:0.45px">1200.5 MHz</div>
<div class="a c" style="left:463px;width:60px;top:807px;letter-spacing:0.45px">16.0</div>
<div class="a c" style="left:524px;width:43px;top:807px;letter-spacing:0.45px">16</div>
<div class="a c" style="left:568px;width:76px;top:807px;letter-spacing:0.45px">16</div>
<div class="a c" style="left:645px;width:39px;top:807px;letter-spacing:0.45px">39</div>
<div class="a c" style="left:685px;width:30px;top:807px;letter-spacing:0.45px">55</div>
<div class="a c" style="left:716px;width:58px;top:807px;letter-spacing:0.45px">1.200 V</div>
<div class="a b" style="left:310px;top:830px;letter-spacing:0.85px">JEDEC #9</div>
<div class="a c" style="left:384px;width:78px;top:830px;letter-spacing:0.45px">1200.5 MHz</div>
<div class="a c" style="left:463px;width:60px;top:830px;letter-spacing:0.45px">18.0</div>
<div class="a c" style="left:524px;width:43px;top:830px;letter-spacing:0.45px">16</div>
<div class="a c" style="left:568px;width:76px;top:830px;letter-spacing:0.45px">16</div>
<div class="a c" style="left:645px;width:39px;top:830px;letter-spacing:0.45px">39</div>
<div class="a c" style="left:685px;width:30px;top:830px;letter-spacing:0.45px">55</div>
<div class="a c" style="left:716px;width:58px;top:830px;letter-spacing:0.45px">1.200 V</div>
<div class="a b" style="left:310px;top:853px;letter-spacing:0.85px">JEDEC #10</div>
<div class="a c" style="left:384px;width:78px;top:853px;letter-spacing:0.45px">1200.5 MHz</div>
<div class="a c" style="left:463px;width:60px;top:853px;letter-spacing:0.45px">20.0</div>
<div class="a c" style="left:524px;width:43px;top:853px;letter-spacing:0.45px">16</div>
<div class="a c" style="left:568px;width:76px;top:853px;letter-spacing:0.45px">16</div>
<div class="a c" style="left:645px;width:39px;top:853px;letter-spacing:0.45px">39</div>
<div class="a c" style="left:685px;width:30px;top:853px;letter-spacing:0.45px">55</div>
<div class="a c" style="left:716px;width:58px;top:853px;letter-spacing:0.45px">1.200 V</div>
<div class="a b" style="left:310px;top:876px;letter-spacing:1.2px">XMP-2400</div>
<div class="a c" style="left:384px;width:78px;top:876px;letter-spacing:0.45px">1200 MHz</div>
<div class="a c" style="left:463px;width:60px;top:876px;letter-spacing:0.45px">16.0</div>
<div class="a c" style="left:524px;width:43px;top:876px;letter-spacing:0.45px">16</div>
<div class="a c" style="left:568px;width:76px;top:876px;letter-spacing:0.45px">16</div>
<div class="a c" style="left:645px;width:39px;top:876px;letter-spacing:0.45px">39</div>
<div class="a c" style="left:685px;width:30px;top:876px;letter-spacing:0.45px"></div>
<div class="a c" style="left:716px;width:58px;top:876px;letter-spacing:0.45px">1.200 V</div>
</body></html>
